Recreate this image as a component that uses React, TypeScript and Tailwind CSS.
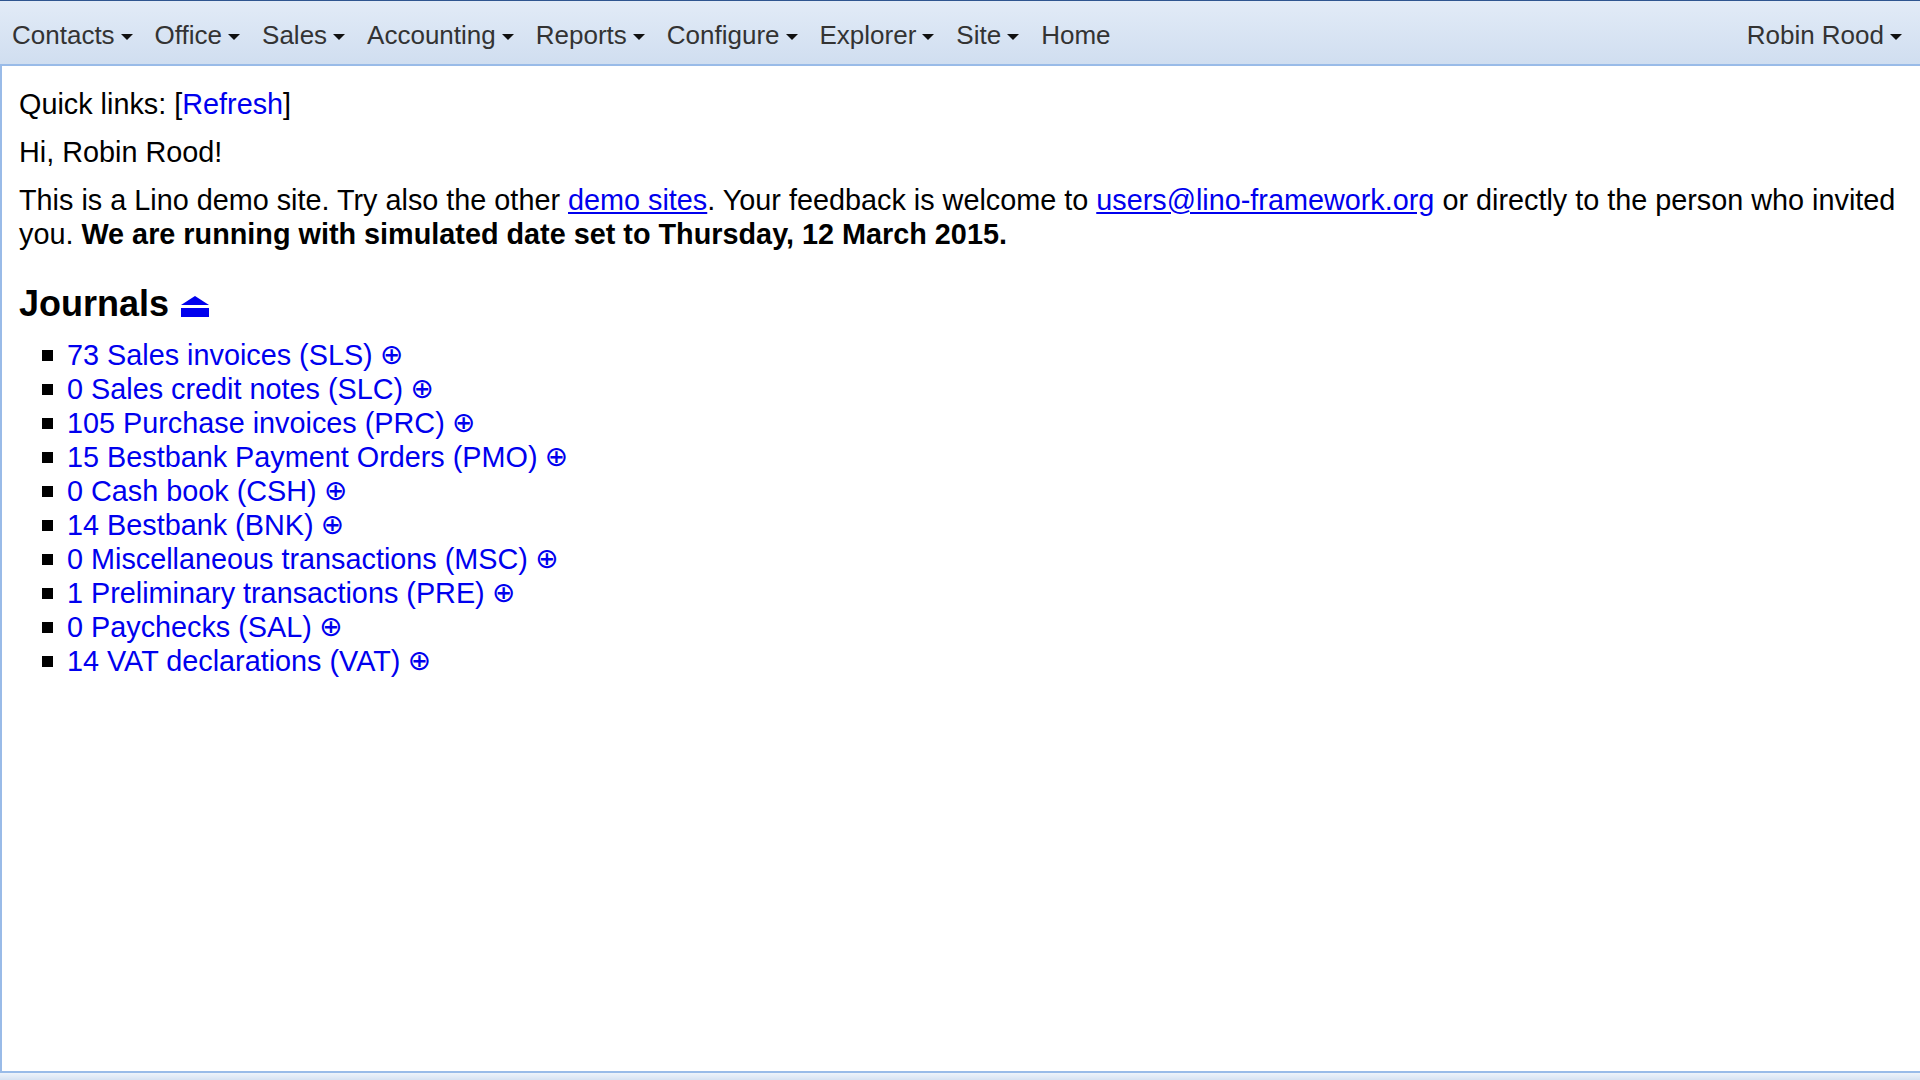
import React from "react";

const menus = ["Contacts", "Office", "Sales", "Accounting", "Reports", "Configure", "Explorer", "Site"];

const journals = [
  "73 Sales invoices (SLS)",
  "0 Sales credit notes (SLC)",
  "105 Purchase invoices (PRC)",
  "15 Bestbank Payment Orders (PMO)",
  "0 Cash book (CSH)",
  "14 Bestbank (BNK)",
  "0 Miscellaneous transactions (MSC)",
  "1 Preliminary transactions (PRE)",
  "0 Paychecks (SAL)",
  "14 VAT declarations (VAT)",
];

const Caret = () => (
  <svg width="12" height="6" viewBox="0 0 12 6" className="ml-[6px] mt-[3px]">
    <path d="M0 0 H12 L6 6 Z" fill="#111" />
  </svg>
);

const MenuItem = ({ label, caret = true }: { label: string; caret?: boolean }) => (
  <div className="flex items-center">
    <span>{label}</span>
    {caret && <Caret />}
  </div>
);

const Eject = () => (
  <svg width="28" height="21" viewBox="0 0 28 21" className="inline-block ml-[12px] align-[-1px]">
    <path d="M0 9 L14 0 L28 9 Z" fill="#0000ee" />
    <rect x="0" y="12" width="28" height="9" fill="#0000ee" />
  </svg>
);

export default function App() {
  return (
    <div className="h-screen flex flex-col bg-white font-['Liberation_Sans',Arial,sans-serif] text-black overflow-hidden">
      <div className="h-[66px] shrink-0 border-t border-t-[#2f5590] border-b-2 border-b-[#99bbe8] bg-gradient-to-b from-[#e2ebf7] to-[#d0def0] flex items-center justify-between pl-[12px] pr-[18px] pt-[5px] text-[26px] text-[#333]">
        <div className="flex items-center gap-[22px]">
          {menus.map((m) => (
            <MenuItem key={m} label={m} />
          ))}
          <MenuItem label="Home" caret={false} />
        </div>
        <MenuItem label="Robin Rood" />
      </div>

      <div className="flex-1 border-l-2 border-b-2 border-[#99bbe8] pl-[17px] pr-[13px] pt-[21px] text-[28.8px] leading-[34px]">
        <p className="mb-[14px]">
          Quick links: [<a className="text-[#0000ee]">Refresh</a>]
        </p>
        <p className="mb-[14px]">Hi, Robin Rood!</p>
        <p>
          This is a Lino demo site. Try also the other{" "}
          <a className="text-[#0000ee] underline">demo sites</a>. Your feedback is welcome to{" "}
          <a className="text-[#0000ee] underline">users@lino-framework.org</a> or directly to the person who invited
          you. <b>We are running with simulated date set to Thursday, 12 March 2015.</b>
        </p>

        <h2 className="mt-[32px] mb-[13px] text-[36px] leading-[42px] font-bold flex items-center">
          Journals
          <a>
            <Eject />
          </a>
        </h2>

        <ul className="pl-[23px]">
          {journals.map((j) => (
            <li key={j} className="flex items-center">
              <span className="w-[11px] h-[11px] bg-black mr-[14px] shrink-0" />
              <a className="text-[#0000ee]">{j}</a>
              <a className="text-[#0000ee] ml-[7px] font-['DejaVu_Sans',sans-serif] text-[28px] leading-[34px]">⊕</a>
            </li>
          ))}
        </ul>
      </div>

      <div className="h-[7px] shrink-0 bg-gradient-to-b from-[#eef3fa] to-[#d6e2f2]" />
    </div>
  );
}
